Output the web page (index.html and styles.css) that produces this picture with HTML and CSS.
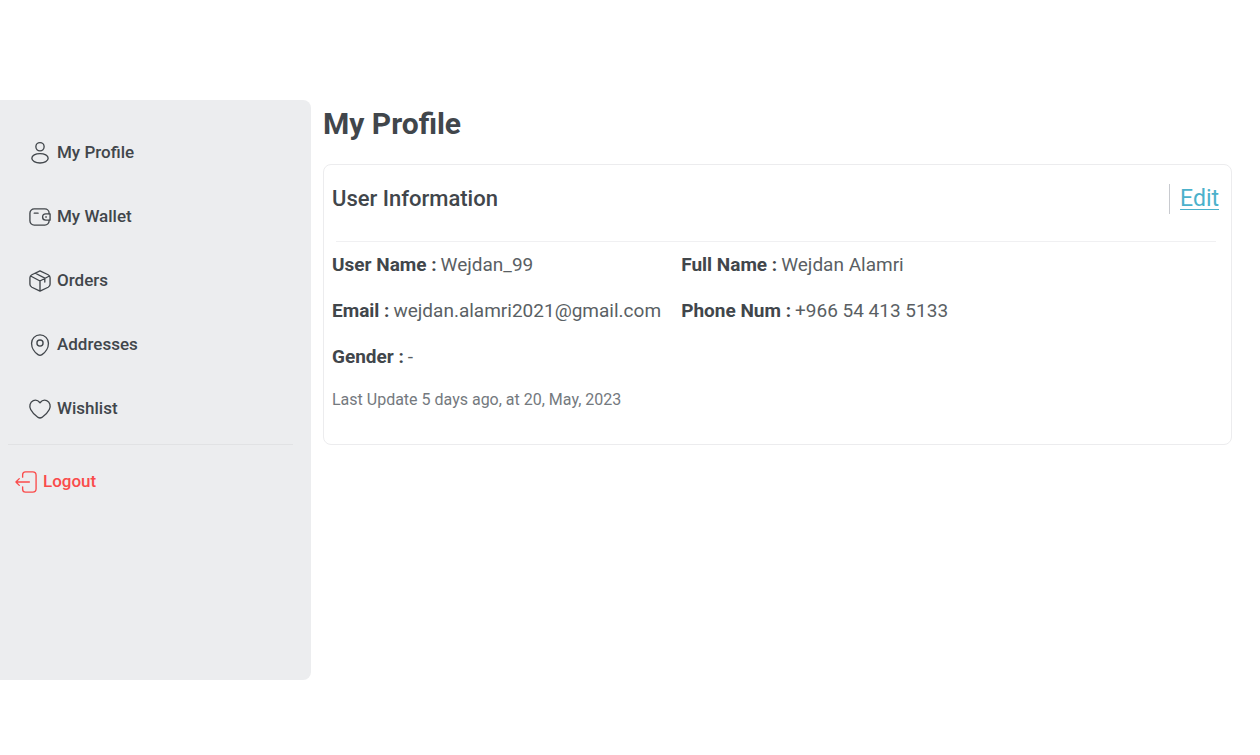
FILE: index.html
```html
<!DOCTYPE html>
<html lang="en">
<head>
<meta charset="utf-8">
<meta name="viewport" content="width=device-width, initial-scale=1">
<title>My Profile</title>
<link rel="stylesheet" href="styles.css">
</head>
<body>
<div class="page">
  <aside class="sidebar">
    <nav class="menu" aria-label="Account">
      <a class="menu-link" href="#profile">
        <svg class="icon" viewBox="-.5 -.5 25 25" aria-hidden="true"><circle cx="12" cy="5.500" r="4.300"/><ellipse cx="12" cy="17.500" rx="8.500" ry="4.900"/></svg>
        <span>My Profile</span>
      </a>
      <a class="menu-link" href="#wallet">
        <svg class="icon" viewBox="-.5 -.5 25 25" aria-hidden="true"><path d="M21.500 8.500V8a4.500 4.500 0 0 0-4.500-4.500H6A4.500 4.500 0 0 0 1.500 8v8A4.500 4.500 0 0 0 6 20.500h11a4.500 4.500 0 0 0 4.500-4.500v-.5M6 8h4"/><path d="M22.500 8.700v6.600H18a3.300 3.300 0 0 1 0-6.600zM18 12h.6"/></svg>
        <span>My Wallet</span>
      </a>
      <a class="menu-link" href="#orders">
        <svg class="icon" viewBox="-.5 -.5 25 25" aria-hidden="true"><path d="M12 1.500 20.500 5.500Q22.500 6.500 22.500 8.500v7q0 2-2 3L12 22.500l-8.500-4q-2-1-2-3v-7q0-2 2-3zM2.200 6.800 12 12l9.800-5.200M12 12v10.500M7.200 3.900 17 9v4"/></svg>
        <span>Orders</span>
      </a>
      <a class="menu-link" href="#addresses">
        <svg class="icon" viewBox="-.5 -.5 25 25" aria-hidden="true"><path d="M12 1.500c-5 0-8.800 3.900-8.800 8.700 0 4.500 2.900 9.500 6.700 11.800a4 4 0 0 0 4.200 0c3.800-2.300 6.700-7.300 6.700-11.800 0-4.800-3.800-8.700-8.800-8.700z"/><circle cx="12" cy="10" r="3.200"/></svg>
        <span>Addresses</span>
      </a>
      <a class="menu-link" href="#wishlist">
        <svg class="icon" viewBox="-.5 -.5 25 25" aria-hidden="true"><path d="M12 5.500C9.800 2.800 7.400 2.200 5 3.300 1.500 4.900.5 9 2.300 12.500c1.600 3.200 4.500 6.200 7.700 8.300q2 1.200 4 0c3.200-2.100 6.100-5.100 7.700-8.300C23.500 9 22.500 4.900 19 3.300c-2.400-1.100-4.800-.5-7 2.200z"/></svg>
        <span>Wishlist</span>
      </a>
    </nav>
    <a class="logout" href="#logout">
      <svg class="icon" viewBox="-.5 -.5 25 25" aria-hidden="true"><path d="M8.500 7V4.500a3 3 0 0 1 3-3h7.500a3.500 3.500 0 0 1 3.500 3.500v14a3.500 3.500 0 0 1-3.500 3.500h-7.500a3 3 0 0 1-3-3V17M15.500 12h-14M5 8.500 1.500 12 5 15.500"/></svg>
      <span>Logout</span>
    </a>
  </aside>
  <main class="content">
    <h1 class="title">My Profile</h1>
    <section class="card">
      <header class="card-head">
        <h2 class="card-title">User Information</h2>
        <a class="edit" href="#edit">Edit</a>
      </header>
      <dl class="fields">
        <div class="field"><dt>User Name :</dt><dd>Wejdan_99</dd></div>
        <div class="field"><dt>Full Name :</dt><dd>Wejdan Alamri</dd></div>
        <div class="field"><dt>Email :</dt><dd>wejdan.alamri2021@gmail.com</dd></div>
        <div class="field"><dt>Phone Num :</dt><dd>+966 54 413 5133</dd></div>
        <div class="field"><dt>Gender :</dt><dd>-</dd></div>
      </dl>
      <p class="updated">Last Update 5 days ago, at 20, May, 2023</p>
    </section>
  </main>
</div>
</body>
</html>
```
FILE: styles.css
```css
* {
  box-sizing: border-box;
}

body {
  margin: 0;
  background: #fff;
  color: #41464b;
  font-family: Roboto, "Liberation Sans", sans-serif;
}

.page {
  display: flex;
  align-items: flex-start;
  gap: 12px;
  padding: 100px 28px 72px 0;
}

.sidebar {
  flex: 0 0 311px;
  min-height: 580px;
  padding: 20px 18px 20px 8px;
  border-radius: 0 8px 8px 0;
  background: #ecedef;
}

.menu {
  display: flex;
  flex-direction: column;
  padding-bottom: 4px;
  border-bottom: 1px solid #e1e2e4;
}

.menu-link,
.logout {
  display: flex;
  align-items: center;
  gap: 5px;
  height: 64px;
  color: #41464b;
  font-size: 17px;
  font-weight: 500;
  line-height: 24px;
  text-decoration: none;
}

.menu-link {
  padding-left: 20px;
}

.logout {
  height: 72px;
  padding-left: 6px;
  color: #fa4b4b;
}

.icon {
  width: 24px;
  height: 24px;
  margin-top: 2px;
  fill: none;
  stroke: currentColor;
  stroke-width: 1.4;
  stroke-linecap: round;
  stroke-linejoin: round;
}

.content {
  flex: 1;
  min-width: 0;
}

.title {
  margin: 0 0 16px;
  font-size: 30px;
  font-weight: 700;
  line-height: 48px;
}

.card {
  padding: 0 8px 32px;
  border: 1px solid #ececee;
  border-radius: 8px;
}

.card-head {
  display: flex;
  align-items: center;
  justify-content: space-between;
  height: 77px;
  margin: 0 7px 0 4px;
  padding-bottom: 8px;
  border-bottom: 1px solid #f0f0f2;
}

.card-title {
  margin: 0 0 0 -4px;
  font-size: 22px;
  font-weight: 500;
  line-height: 32px;
}

.edit {
  margin-right: -3px;
  padding-left: 10px;
  border-left: 1px solid #c8cacf;
  color: #4bb1cb;
  font-size: 23px;
  line-height: 30px;
  text-decoration-thickness: 1px;
  text-underline-offset: 3px;
}

.fields {
  display: grid;
  grid-template-columns: 2fr 3fr;
  row-gap: 16px;
  margin: 0;
  padding: 8px 18px 0 0;
}

.field {
  display: flex;
  gap: 4px;
  font-size: 19px;
  line-height: 30px;
  white-space: nowrap;
}

.field dt {
  font-weight: 700;
}

.field dd {
  margin: 0;
  color: #5a5f64;
}

.updated {
  margin: 16px 0 0;
  color: #74797e;
  font-size: 16px;
  line-height: 24px;
}
```
